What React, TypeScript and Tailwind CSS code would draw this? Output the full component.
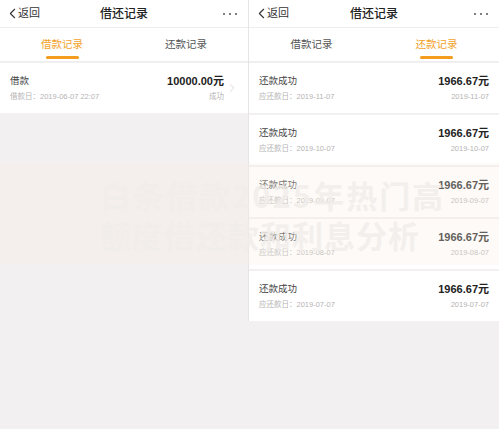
import { ChevronLeft, ChevronRight } from "lucide-react";

const font = "font-['Liberation_Sans','Noto_Sans_CJK_SC',sans-serif]";

type Row = { title: string; label: string; date: string; amount: string; right: string };

const repayments: Row[] = [
  { title: "还款成功", label: "应还款日：", date: "2019-11-07", amount: "1966.67元", right: "2019-11-07" },
  { title: "还款成功", label: "应还款日：", date: "2019-10-07", amount: "1966.67元", right: "2019-10-07" },
  { title: "还款成功", label: "应还款日：", date: "2019-09-07", amount: "1966.67元", right: "2019-09-07" },
  { title: "还款成功", label: "应还款日：", date: "2019-08-07", amount: "1966.67元", right: "2019-08-07" },
  { title: "还款成功", label: "应还款日：", date: "2019-07-07", amount: "1966.67元", right: "2019-07-07" },
];

function Phone({ tab, children }: { tab: 0 | 1; children: React.ReactNode }) {
  const tabs = ["借款记录", "还款记录"];
  return (
    <div className="flex flex-col">
      {/* header */}
      <div className="h-[28px] bg-white flex items-center px-[8px] border-b border-[#efeded]">
        <div className="flex items-center w-[60px] text-[#333]">
          <ChevronLeft size={17} strokeWidth={1.5} className="-ml-[4px]" />
          <span className="text-[11px] -ml-[3px]">返回</span>
        </div>
        <div className="flex-1 text-center text-[12px] text-[#222] font-medium">借还记录</div>
        <div className="w-[60px] flex justify-end gap-[4px] pr-[3px]">
          <span className="w-[2px] h-[2px] rounded-full bg-[#555]" />
          <span className="w-[2px] h-[2px] rounded-full bg-[#555]" />
          <span className="w-[2px] h-[2px] rounded-full bg-[#555]" />
        </div>
      </div>
      {/* tabs */}
      <div className="h-[34px] bg-white grid grid-cols-2 border-b border-[#ededed]">
        {tabs.map((t, i) => (
          <div key={t} className="relative flex items-center justify-center">
            <span className={`text-[10.5px] ${i === tab ? "text-[#f2a229]" : "text-[#555]"}`}>{t}</span>
            {i === tab && (
              <span className="absolute bottom-[2px] w-[33px] h-[3px] rounded-full bg-[#f39c1e]" />
            )}
          </div>
        ))}
      </div>
      <div className="flex flex-col gap-[2px] mt-[1px]">{children}</div>
    </div>
  );
}

function Card({ row, chevron }: { row: Row; chevron?: boolean }) {
  return (
    <div className={`h-[50px] bg-white flex items-center pl-[10px] ${chevron ? "pr-[12px]" : "pr-[10px]"}`}>
      <div className="flex-1 flex flex-col">
        <div className="flex items-center justify-between h-[17px] mt-[1px]">
          <span className="text-[9.5px] text-[#444]">{row.title}</span>
          <span className="text-[11px] font-bold text-[#222]">{row.amount}</span>
        </div>
        <div className="flex items-center justify-between h-[14px]">
          <span className="text-[7.5px] text-[#b5b3b3]">
            {row.label}
            {row.date}
          </span>
          <span className="text-[7.5px] text-[#b5b3b3]">{row.right}</span>
        </div>
      </div>
      {chevron && <ChevronRight size={14} strokeWidth={1.1} className="text-[#c6c4c4] ml-[1px] -mr-[3px]" />}
    </div>
  );
}

export default function App() {
  return (
    <div className={`relative w-[499px] h-[429px] overflow-hidden bg-[#f2f0f0] ${font}`}>
      <div className="flex">
        <div className="w-[248px]">
          <Phone tab={0}>
            <Card
              chevron
              row={{ title: "借款", label: "借款日：", date: "2019-06-07 22:07", amount: "10000.00元", right: "成功" }}
            />
          </Phone>
        </div>
        <div className="w-[1px] bg-[#e6e4e4]" />
        <div className="flex-1">
          <Phone tab={1}>
            {repayments.map((r) => (
              <Card key={r.date} row={r} />
            ))}
          </Phone>
        </div>
      </div>

      {/* watermark */}
      <div className="absolute left-0 right-0 top-[163px] h-[102px] bg-[rgba(248,238,228,0.3)] flex flex-col justify-center pl-[100px] pt-[2px]">
        <div className="text-[31px] font-bold leading-[40px] text-[rgba(240,237,234,0.8)] tracking-[2px] whitespace-nowrap font-['Noto_Sans_CJK_SC',sans-serif]">
          白条借款2025年热门高
        </div>
        <div className="text-[31px] font-bold leading-[40px] text-[rgba(240,237,234,0.8)] tracking-[1px] whitespace-nowrap font-['Noto_Sans_CJK_SC',sans-serif]">
          额度借还款和利息分析
        </div>
      </div>
    </div>
  );
}
